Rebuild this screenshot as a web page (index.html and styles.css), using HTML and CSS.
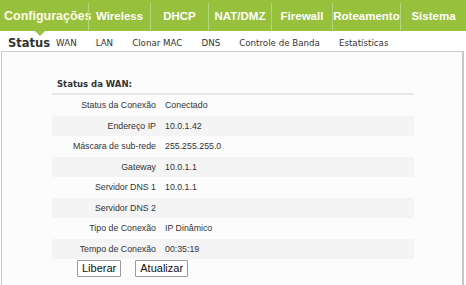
FILE: index.html
```html
<!DOCTYPE html>
<html lang="pt-BR">
<head>
  <meta charset="UTF-8" />
  <title>Status</title>
  <link rel="stylesheet" href="styles.css">
</head>
<body>

  <div class="topnav">
    <a class="tab active">Configurações</a>
    <a class="tab">Wireless</a>
    <a class="tab">DHCP</a>
    <a class="tab">NAT/DMZ</a>
    <a class="tab">Firewall</a>
    <a class="tab">Roteamento</a>
    <a class="tab">Sistema</a>
  </div>

  <div class="subnav">
    <a class="sub active">Status</a>
    <a class="sub">WAN</a>
    <a class="sub">LAN</a>
    <a class="sub">Clonar MAC</a>
    <a class="sub">DNS</a>
    <a class="sub">Controle de Banda</a>
    <a class="sub">Estatísticas</a>
  </div>

  <div class="panel">
    <h3 class="title">Status da WAN:</h3>
    <table class="status">
      <tr><td class="lbl">Status da Conexão</td><td>Conectado</td></tr>
      <tr><td class="lbl">Endereço IP</td><td>10.0.1.42</td></tr>
      <tr><td class="lbl">Máscara de sub-rede</td><td>255.255.255.0</td></tr>
      <tr><td class="lbl">Gateway</td><td>10.0.1.1</td></tr>
      <tr><td class="lbl">Servidor DNS 1</td><td>10.0.1.1</td></tr>
      <tr><td class="lbl">Servidor DNS 2</td><td></td></tr>
      <tr><td class="lbl">Tipo de Conexão</td><td>IP Dinâmico</td></tr>
      <tr><td class="lbl">Tempo de Conexão</td><td>00:35:19</td></tr>
    </table>
    <div class="actions">
      <button class="btn">Liberar</button>
      <button class="btn">Atualizar</button>
    </div>
  </div>

</body>
</html>
```

FILE: styles.css
```css
body { margin: 0; background: #fff; font-family: "Liberation Sans", Arial, sans-serif; color: #333; overflow: hidden; }

.topnav {
  display: grid; height: 31px; background: #97c03c;
  grid-template-columns: 88px 62px 58px 63px 61px 68px 1fr;
}
.tab {
  position: relative; display: flex; align-items: center; justify-content: center;
  color: #fff; font-weight: bold; font-size: 11.5px; border-left: 1px solid #b5d579;
  margin: 3px 0 0; padding-bottom: 3px;
}
.tab:first-child { border-left: none; }
.tab.active { font-size: 12.5px; color: #fffbe6; justify-content: flex-start; padding-left: 4px; }
.tab.active::after {
  content: ""; position: absolute; left: 35px; top: 28px;
  border: 5px solid transparent; border-top-color: #97c03c; border-bottom: none;
}

.subnav { display: flex; height: 20px; align-items: center; padding: 4px 0 0 8px; box-sizing: border-box; }
.sub { font-family: "DejaVu Sans", Verdana, sans-serif; font-size: 8.7px; color: #333; margin-right: 19px; }
.sub.active { font-weight: bold; font-size: 11.5px; margin-right: 6px; }

.panel {
  margin: 0 2px 0 1px; height: 300px; background: #fcfcfc;
  border: 1px solid #ccc; border-right: 2px solid #c8c8c8;
  padding: 0 0 0 50px;
}
.title {
  margin: 27px 0 0 5px; font-weight: bold; color: #333;
  font-family: "DejaVu Sans", Verdana, sans-serif; font-size: 8.5px;
}
.status {
  margin-top: 4px; width: 362px; border-collapse: collapse;
  border-top: 2px solid #e6e6e6; font-size: 8.8px; color: #333;
}
.status td { height: 20.5px; padding: 0 0 0 1px; }
.status td.lbl { width: 104px; text-align: right; padding: 0 8px 0 0; }
.status tr:nth-child(even) { background: #f4f4f4; }

.actions { display: flex; gap: 14px; margin: 1px 0 0 25px; }
.btn {
  font-family: "Liberation Sans", Arial, sans-serif; font-size: 11px; color: #111;
  background: #fff; border: 1px solid #999; border-radius: 1px;
  height: 17px; padding: 0 4px; line-height: 15px;
}
```
